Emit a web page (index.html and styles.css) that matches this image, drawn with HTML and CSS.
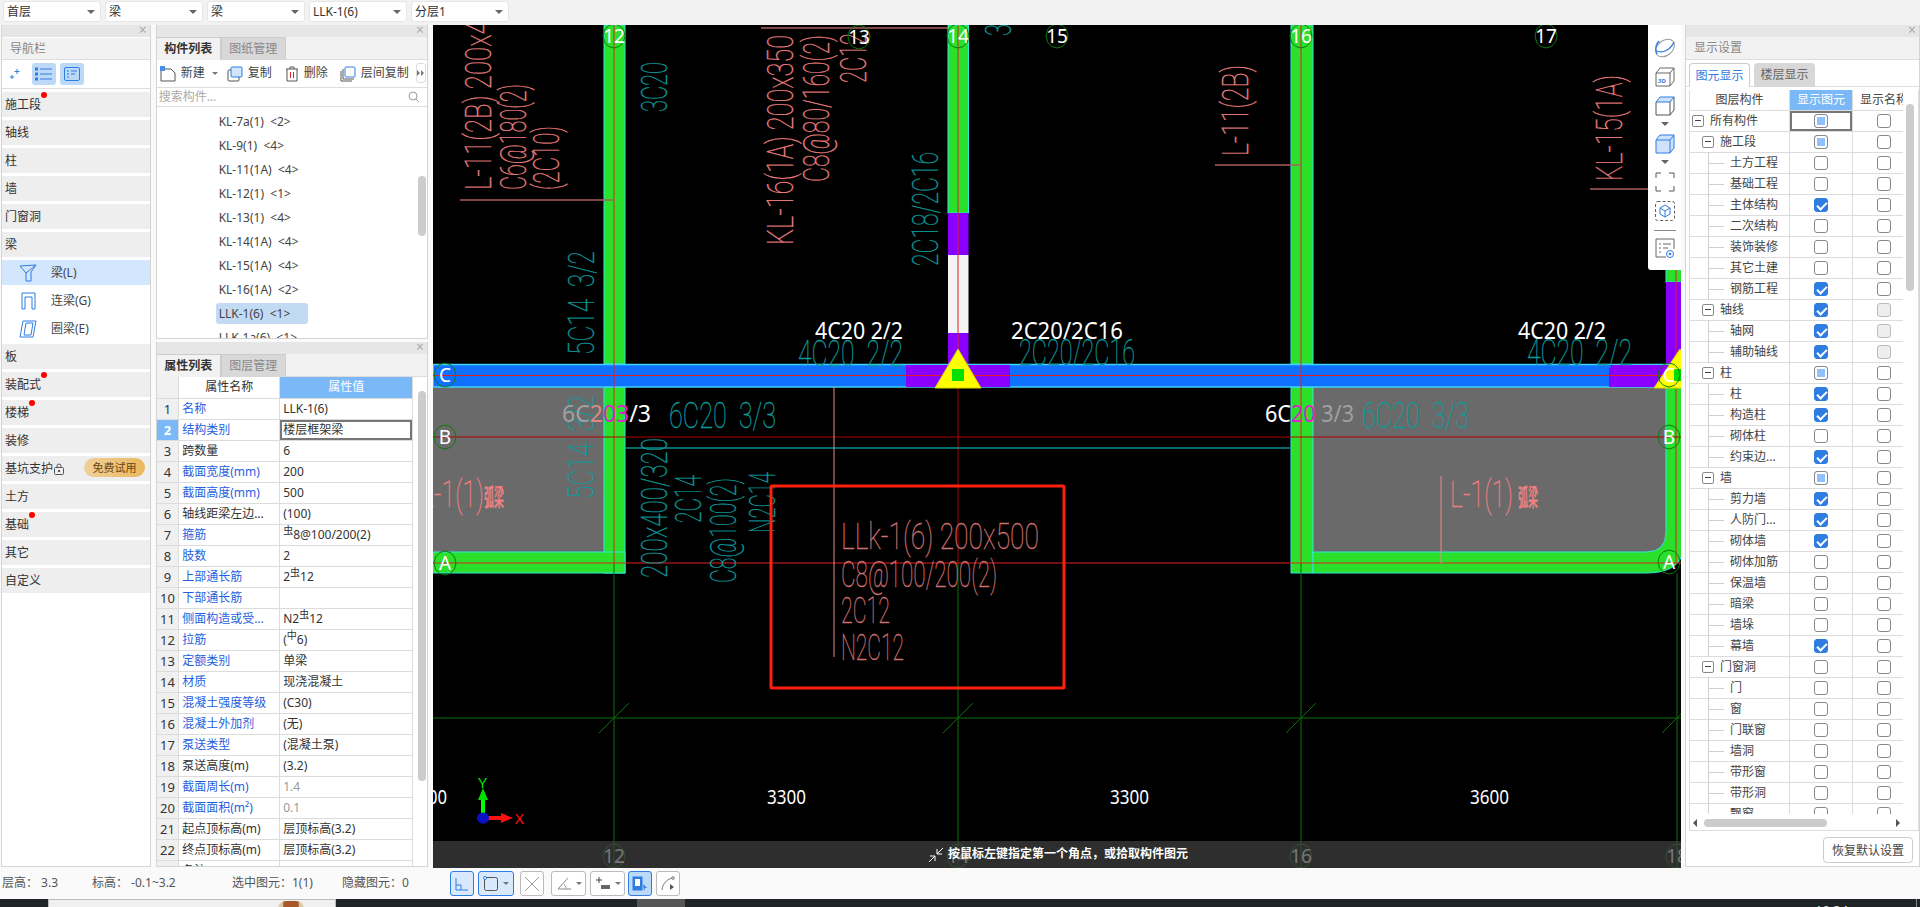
FILE: index.html
```html
<!DOCTYPE html>
<html lang="zh-CN">
<head>
<meta charset="utf-8">
<title>GTJ</title>
<link rel="stylesheet" href="styles.css">
</head>
<body>
<svg class="defs" width="0" height="0" aria-hidden="true">
  <defs>
    <polygon id="bub" points="0,-12 5.5,-10.4 9.5,-6 11,0 9.5,6 5.5,10.4 0,12 -5.5,10.4 -9.5,6 -11,0 -9.5,-6 -5.5,-10.4"/>
  </defs>
</svg>

<header class="topbar">
  <div class="combo big">首层<i class="caret"></i></div>
  <div class="combo">梁<i class="caret"></i></div>
  <div class="combo">梁<i class="caret"></i></div>
  <div class="combo">LLK-1(6)<i class="caret"></i></div>
  <div class="combo">分层1<i class="caret"></i></div>
</header>

<main class="main">
  <aside class="panel nav">
    <div class="strip"><span class="close">×</span></div>
    <div class="nav-title">导航栏</div>
    <div class="nav-tools">
      <svg class="tool-sparkle" viewBox="0 0 12 12" width="12" height="12"><path d="M8 1v5M5.5 3.5h5M3 7v4M1 9h4" stroke="#2f7de1" fill="none"/></svg>
      <span class="nav-btn"><svg viewBox="0 0 18 14" width="18" height="14"><path d="M5 2h12M5 7h12M5 12h12" stroke="#2f7de1" fill="none"/><g fill="none" stroke="#2f7de1"><rect x="0.5" y="1" width="2" height="2"/><rect x="0.5" y="6" width="2" height="2"/><rect x="0.5" y="11" width="2" height="2"/></g></svg></span>
      <span class="nav-btn"><svg viewBox="0 0 16 14" width="16" height="14"><rect x="0.5" y="0.5" width="15" height="13" rx="1.5" fill="none" stroke="#2f7de1"/><path d="M3 4h2M7 4h6M3 7h2M7 7h4M3 10h2" stroke="#2f7de1"/></svg></span>
    </div>
    <div class="nav-list">
      <div class="nav-item"><span class="dotted">施工段</span></div>
      <div class="nav-item">轴线</div>
      <div class="nav-item">柱</div>
      <div class="nav-item">墙</div>
      <div class="nav-item">门窗洞</div>
      <div class="nav-item">梁</div>
      <div class="nav-sub sel">
        <svg viewBox="0 0 18 18" width="18" height="18"><path d="M1 2l16-1-5 7v9H7V9L1 2zM7 9l10-8" fill="none" stroke="#2f7de1"/></svg>梁(L)</div>
      <div class="nav-sub">
        <svg viewBox="0 0 18 18" width="18" height="18"><path d="M3 17V1h13v16h-3V5H6v12z" fill="none" stroke="#2f7de1"/></svg>连梁(G)</div>
      <div class="nav-sub">
        <svg viewBox="0 0 18 18" width="18" height="18"><path d="M4 1h13l-3 16H1zM7 3h7l-2 12H5z" fill="none" stroke="#2f7de1"/></svg>圈梁(E)</div>
      <div class="nav-item">板</div>
      <div class="nav-item"><span class="dotted">装配式</span></div>
      <div class="nav-item"><span class="dotted">楼梯</span></div>
      <div class="nav-item">装修</div>
      <div class="nav-item plain">基坑支护<svg class="lock" viewBox="0 0 10 12" width="10" height="12"><rect x="0.5" y="4.5" width="9" height="7" rx="1" fill="none" stroke="#555"/><path d="M3 4.5V3a2 2 0 0 1 4 0v1.5" fill="none" stroke="#555"/><rect x="4" y="7" width="2" height="2" fill="#555"/></svg><span class="trial">免费试用</span></div>
      <div class="nav-item">土方</div>
      <div class="nav-item"><span class="dotted">基础</span></div>
      <div class="nav-item">其它</div>
      <div class="nav-item">自定义</div>
    </div>
  </aside>

  <section class="mid">
    <div class="panel comp">
      <div class="strip"><span class="close">×</span></div>
      <div class="tabs"><span class="tab on">构件列表</span><span class="tab">图纸管理</span></div>
      <div class="comp-tools">
        <svg viewBox="0 0 16 16" width="16" height="16"><path d="M1 3h10l4 4v8H1z" fill="none" stroke="#555"/><rect x="0" y="0" width="5" height="5" fill="#4a8ee8"/></svg><span class="lbl">新建</span><i class="mini-caret"></i>
        <svg class="gap1" viewBox="0 0 16 16" width="16" height="16"><rect x="1" y="4" width="11" height="11" rx="1" fill="#fff" stroke="#555"/><rect x="4" y="1" width="11" height="10" rx="1" fill="#d3e5fb" stroke="#2f7de1"/></svg><span class="lbl">复制</span>
        <svg class="gap2" viewBox="0 0 14 16" width="14" height="16"><path d="M1 3h12M5 3V1h4v2M2 3v12h10V3" fill="none" stroke="#555"/><path d="M5.5 6v6M8.5 6v6" stroke="#d22"/></svg><span class="lbl">删除</span>
        <svg class="gap3" viewBox="0 0 16 16" width="16" height="16"><path d="M1 5v10h11M3 3v10h11" fill="none" stroke="#555"/><rect x="5" y="1" width="10" height="10" rx="1" fill="#fff" stroke="#2f7de1"/></svg><span class="lbl">层间复制</span>
        <span class="more"><svg viewBox="0 0 8 6" width="8" height="6"><path d="M0 0l3 3-3 3zM4 0l3 3-3 3z" fill="#777"/></svg></span>
      </div>
      <div class="search"><span>搜索构件...</span><svg viewBox="0 0 12 12" width="12" height="12"><circle cx="5" cy="5" r="4" fill="none" stroke="#999"/><path d="M8 8l3 3" stroke="#999"/></svg></div>
      <div class="comp-list">
        <div class="comp-row">KL-7a(1) &nbsp;&lt;2&gt;</div>
        <div class="comp-row">KL-9(1) &nbsp;&lt;4&gt;</div>
        <div class="comp-row">KL-11(1A) &nbsp;&lt;4&gt;</div>
        <div class="comp-row">KL-12(1) &nbsp;&lt;1&gt;</div>
        <div class="comp-row">KL-13(1) &nbsp;&lt;4&gt;</div>
        <div class="comp-row">KL-14(1A) &nbsp;&lt;4&gt;</div>
        <div class="comp-row">KL-15(1A) &nbsp;&lt;4&gt;</div>
        <div class="comp-row">KL-16(1A) &nbsp;&lt;2&gt;</div>
        <div class="comp-row"><span class="comp-sel">LLK-1(6) &nbsp;&lt;1&gt;</span></div>
        <div class="comp-row">LLK-1a(6) &nbsp;&lt;1&gt;</div>
        <span class="vbar vbar-comp"></span>
      </div>
    </div>

    <div class="panel props">
      <div class="strip"><span class="close">×</span></div>
      <div class="tabs"><span class="tab on">属性列表</span><span class="tab">图层管理</span></div>
      <div class="prop-wrap">
        <table class="prop-table">
          <colgroup><col class="c-n"><col class="c-k"><col class="c-v"></colgroup>
          <tr class="head"><th class="num"></th><th>属性名称</th><th class="hot">属性值</th></tr>
          <tr><td class="num">1</td><td class="blue">名称</td><td>LLK-1(6)</td></tr>
          <tr><td class="num hot">2</td><td class="blue">结构类别</td><td class="edit">楼层框架梁</td></tr>
          <tr><td class="num">3</td><td>跨数量</td><td>6</td></tr>
          <tr><td class="num">4</td><td class="blue">截面宽度(mm)</td><td>200</td></tr>
          <tr><td class="num">5</td><td class="blue">截面高度(mm)</td><td>500</td></tr>
          <tr><td class="num">6</td><td>轴线距梁左边...</td><td>(100)</td></tr>
          <tr><td class="num">7</td><td class="blue">箍筋</td><td><sup>虫</sup>8@100/200(2)</td></tr>
          <tr><td class="num">8</td><td class="blue">肢数</td><td>2</td></tr>
          <tr><td class="num">9</td><td class="blue">上部通长筋</td><td>2<sup>虫</sup>12</td></tr>
          <tr><td class="num">10</td><td class="blue">下部通长筋</td><td></td></tr>
          <tr><td class="num">11</td><td class="blue">侧面构造或受...</td><td>N2<sup>虫</sup>12</td></tr>
          <tr><td class="num">12</td><td class="blue">拉筋</td><td>(<sup>中</sup>6)</td></tr>
          <tr><td class="num">13</td><td class="blue">定额类别</td><td>单梁</td></tr>
          <tr><td class="num">14</td><td class="blue">材质</td><td>现浇混凝土</td></tr>
          <tr><td class="num">15</td><td class="blue">混凝土强度等级</td><td>(C30)</td></tr>
          <tr><td class="num">16</td><td class="blue">混凝土外加剂</td><td>(无)</td></tr>
          <tr><td class="num">17</td><td class="blue">泵送类型</td><td>(混凝土泵)</td></tr>
          <tr><td class="num">18</td><td>泵送高度(m)</td><td>(3.2)</td></tr>
          <tr><td class="num">19</td><td class="blue">截面周长(m)</td><td class="dim">1.4</td></tr>
          <tr><td class="num">20</td><td class="blue">截面面积(m²)</td><td class="dim">0.1</td></tr>
          <tr><td class="num">21</td><td>起点顶标高(m)</td><td>层顶标高(3.2)</td></tr>
          <tr><td class="num">22</td><td>终点顶标高(m)</td><td>层顶标高(3.2)</td></tr>
          <tr><td class="num">23</td><td>备注</td><td></td></tr>
        </table>
        <span class="vbar vbar-prop"></span>
      </div>
    </div>
  </section>

  <section class="canvas">
    <svg class="cad" viewBox="433 25 1248 843" width="1248" height="843">
      <rect class="bg" x="433" y="25" width="1248" height="843"/>
      <!-- slabs -->
      <rect class="slab" x="433" y="387" width="171" height="165"/>
      <rect class="slab" x="1313" y="387" width="353" height="165"/>
      <!-- columns / beams -->
      <rect class="wall" x="604" y="25" width="21" height="339"/>
      <rect class="wall" x="604" y="387" width="21" height="186"/>
      <rect class="wall" x="433" y="552" width="192" height="21"/>
      <rect class="wall" x="948" y="25" width="20.5" height="188"/>
      <rect class="purple" x="948" y="213" width="20.5" height="42"/>
      <rect class="white" x="948" y="255" width="20.5" height="78"/>
      <rect class="purple" x="948" y="333" width="20.5" height="31"/>
      <rect class="wall" x="1291" y="25" width="22" height="339"/>
      <rect class="wall" x="1291" y="387" width="22" height="186"/>
      <path class="wall" d="M1313 552H1646Q1666 552 1666 532V387H1682V555Q1676 573 1646 573H1313Z"/>
      <rect class="wall" x="1666" y="260" width="16" height="22"/>
      <rect class="purple" x="1666" y="282" width="16" height="82"/>
      <rect class="beam" x="433" y="364.5" width="1249" height="22.5"/>
      <rect class="purple" x="906" y="365" width="104" height="22"/>
      <rect class="purple" x="1609" y="365" width="73" height="22"/>
      <!-- axes -->
      <path class="grn" d="M433 718H1681M614 563V868M958 563V868M1301 563V868M1677 573V868M599 733L629 703M943 733L973 703M1286 733L1316 703M1662 733L1681 714"/>
      <path class="red" d="M433 375.5H1681M614 25V563M958 25V388M1301 25V563M1676 25V563M433 563H1681"/>
      <path class="red-d" d="M433 437H1681M958 388V563"/>
      <path class="teal-l" d="M625 448H1291"/>
      <path class="leader" d="M460 200H614M761 28H948M1215 165H1301M1590 189H1650"/>
      <path class="pink-l" d="M834 387V657M1441 476V563"/>
      <!-- column marker -->
      <polygon class="yel" points="958,349 981,388 935,388"/>
      <rect class="sq" x="952" y="369" width="12" height="12"/>
      <polygon class="yel" points="1680,349 1703,388 1654,388"/>
      <rect class="sq" x="1674" y="369" width="12" height="12"/>

      <!-- vertical CAD text -->
      <g class="cad-txt pink">
        <text transform="translate(491,190) rotate(-90)" textLength="198" lengthAdjust="spacingAndGlyphs">L-11(2B) 200x400</text>
        <text transform="translate(526,190) rotate(-90)" textLength="106" lengthAdjust="spacingAndGlyphs">C6@180(2)</text>
        <text transform="translate(559,190) rotate(-90)" textLength="64" lengthAdjust="spacingAndGlyphs">(2C10)</text>
        <text transform="translate(793,245) rotate(-90)" textLength="210" lengthAdjust="spacingAndGlyphs">KL-16(1A) 200x350</text>
        <text transform="translate(829,182) rotate(-90)" textLength="147" lengthAdjust="spacingAndGlyphs">C8@80/160(2)</text>
        <text transform="translate(866,83) rotate(-90)" textLength="50" lengthAdjust="spacingAndGlyphs">2C12</text>
        <text transform="translate(1248,156) rotate(-90)" textLength="91" lengthAdjust="spacingAndGlyphs">L-11(2B)</text>
        <text transform="translate(1622,181) rotate(-90)" textLength="106" lengthAdjust="spacingAndGlyphs">KL-15(1A)</text>
      </g>
      <g class="cad-txt teal">
        <text transform="translate(667,112) rotate(-90)" textLength="50" lengthAdjust="spacingAndGlyphs">3C20</text>
        <text transform="translate(594,355) rotate(-90)" textLength="104" lengthAdjust="spacingAndGlyphs">5C14&#160;&#160;3/2</text>
        <text transform="translate(594,499) rotate(-90)" textLength="104" lengthAdjust="spacingAndGlyphs">5C14&#160;&#160;3/2</text>
        <text transform="translate(938,266) rotate(-90)" textLength="114" lengthAdjust="spacingAndGlyphs">2C18/2C16</text>
        <text transform="translate(667,578) rotate(-90)" textLength="140" lengthAdjust="spacingAndGlyphs">200x400/320</text>
        <text transform="translate(701,523) rotate(-90)" textLength="48" lengthAdjust="spacingAndGlyphs">2C14</text>
        <text transform="translate(736,583) rotate(-90)" textLength="105" lengthAdjust="spacingAndGlyphs">C8@100(2)</text>
        <text transform="translate(775,533) rotate(-90)" textLength="61" lengthAdjust="spacingAndGlyphs">N2C14</text>
        <text transform="translate(1011,36) rotate(-90)" textLength="12" lengthAdjust="spacingAndGlyphs">3</text>
      </g>
      <!-- horizontal teal text -->
      <g class="cad-txt teal">
        <text x="798" y="366" textLength="105" lengthAdjust="spacingAndGlyphs">4C20&#160;&#160;2/2</text>
        <text x="1019" y="365" textLength="116" lengthAdjust="spacingAndGlyphs">2C20/2C16</text>
        <text x="1527" y="365" textLength="105" lengthAdjust="spacingAndGlyphs">4C20&#160;&#160;2/2</text>
        <text x="669" y="428" textLength="107" lengthAdjust="spacingAndGlyphs">6C20&#160;&#160;3/3</text>
        <text x="1362" y="428" textLength="107" lengthAdjust="spacingAndGlyphs">6C20&#160;&#160;3/3</text>
      </g>
      <!-- selected beam label -->
      <rect class="redbox" x="771" y="486" width="293" height="202" rx="1"/>
      <g class="cad-txt pinkd">
        <text x="841" y="549" textLength="198" lengthAdjust="spacingAndGlyphs">LLk-1(6) 200x500</text>
        <text x="841" y="587" textLength="156" lengthAdjust="spacingAndGlyphs">C8@100/200(2)</text>
        <text x="841" y="623" textLength="49" lengthAdjust="spacingAndGlyphs">2C12</text>
        <text x="841" y="660" textLength="63" lengthAdjust="spacingAndGlyphs">N2C12</text>
      </g>
      <g class="cad-txt pink">
        <text x="1450" y="507" textLength="63" lengthAdjust="spacingAndGlyphs">L-1(1)</text>
        <text x="421" y="507" textLength="63" lengthAdjust="spacingAndGlyphs">L-1(1)</text>
      </g>
      <g class="arc-txt">
        <text x="1518" y="506" textLength="20" lengthAdjust="spacingAndGlyphs">弧梁</text>
        <text x="484" y="506" textLength="20" lengthAdjust="spacingAndGlyphs">弧梁</text>
      </g>
      <!-- white labels -->
      <g class="lab">
        <text x="815" y="339" textLength="88" lengthAdjust="spacingAndGlyphs">4C20 2/2</text>
        <text x="1011" y="339" textLength="112" lengthAdjust="spacingAndGlyphs">2C20/2C16</text>
        <text x="1518" y="339" textLength="88" lengthAdjust="spacingAndGlyphs">4C20 2/2</text>
        <text x="562" y="422" textLength="89" lengthAdjust="spacingAndGlyphs"><tspan class="t-grey">6C</tspan><tspan class="t-salmon">2</tspan><tspan class="t-mag">03</tspan>/3</text>
        <text x="1265" y="422" textLength="89" lengthAdjust="spacingAndGlyphs">6C<tspan class="t-mag">20</tspan><tspan class="t-grey"> 3/3</tspan></text>
      </g>
      <g class="dimt">
        <text x="767" y="804" textLength="39" lengthAdjust="spacingAndGlyphs">3300</text>
        <text x="1110" y="804" textLength="39" lengthAdjust="spacingAndGlyphs">3300</text>
        <text x="1470" y="804" textLength="39" lengthAdjust="spacingAndGlyphs">3600</text>
        <text x="428" y="804" textLength="19" lengthAdjust="spacingAndGlyphs">00</text>
      </g>
      <!-- bubbles -->
      <g class="bubbles">
        <use href="#bub" x="614" y="36"/><use href="#bub" x="859" y="37"/><use href="#bub" x="958" y="36"/>
        <use href="#bub" x="1057" y="36"/><use href="#bub" x="1301" y="36"/><use href="#bub" x="1546" y="36"/>
        <use href="#bub" x="445" y="375"/><use href="#bub" x="445" y="437"/><use href="#bub" x="445" y="563"/>
        <use href="#bub" x="1669" y="375"/><use href="#bub" x="1669" y="437"/><use href="#bub" x="1669" y="562"/>
        <use href="#bub" x="614" y="856"/><use href="#bub" x="958" y="856"/><use href="#bub" x="1301" y="856"/><use href="#bub" x="1677" y="856"/>
      </g>
      <g class="bub-t">
        <text x="614" y="43">12</text><text x="859" y="44">13</text><text x="958" y="43">14</text>
        <text x="1057" y="43">15</text><text x="1301" y="43">16</text><text x="1546" y="43">17</text>
        <text x="445" y="382">C</text><text x="445" y="444">B</text><text x="445" y="570">A</text>
        <text x="1669" y="382">C</text><text x="1669" y="444">B</text><text x="1669" y="569">A</text>
        <text x="614" y="863">12</text><text x="958" y="863">14</text><text x="1301" y="863">16</text><text x="1677" y="863">18</text>
      </g>
      <!-- UCS -->
      <path class="ucs-g" d="M483 813V798"/>
      <polygon class="ucs-gf" points="483,788 488,800 478,800"/>
      <path class="ucs-r" d="M488 818H502"/>
      <polygon class="ucs-rf" points="513,818 501,813 501,823"/>
      <ellipse class="ucs-b" cx="483" cy="818" rx="6" ry="5.5"/>
      <text class="ucs-y" x="478" y="788" textLength="9" lengthAdjust="spacingAndGlyphs">Y</text>
      <text class="ucs-x" x="515" y="824" textLength="9" lengthAdjust="spacingAndGlyphs">X</text>
    </svg>

    <div class="hint">
      <svg viewBox="0 0 16 16" width="16" height="16"><path d="M15 1L9 7M9 2v5h5M1 15l6-6M7 14V9H2" fill="none" stroke="#fff"/></svg>
      <span>按鼠标左键指定第一个角点，或拾取构件图元</span>
    </div>

    <div class="float">
      <svg class="f-globe" viewBox="0 0 22 22" width="22" height="22"><ellipse cx="11" cy="11" rx="7.5" ry="10.5" transform="rotate(50 11 11)" fill="none" stroke="#999"/><path d="M3 17C1 12 2 7 5 4" fill="none" stroke="#2f7de1" stroke-width="1.3"/><path d="M3 14c6 3 14-2 17-9" fill="none" stroke="#2f7de1" stroke-width="1.3"/></svg>
      <svg class="f-3d" viewBox="0 0 20 20" width="20" height="20"><path d="M1 6h14v13H1zM1 6l4-5h14v13l-4 5M15 6l4-5" fill="none" stroke="#666"/><text x="3" y="16">3D</text></svg>
      <svg class="f-box" viewBox="0 0 20 20" width="20" height="20"><path d="M1 6l4-5h14l-4 5z" fill="#cfe2fb" stroke="#2f7de1"/><path d="M1 6v13h14l4-5V1M15 6v13" fill="none" stroke="#555"/></svg>
      <i class="f-caret"></i>
      <svg class="f-box" viewBox="0 0 20 20" width="20" height="20"><path d="M1 6l4-5h14v13l-4 5H1z" fill="#cfe2fb" stroke="#2f7de1"/><path d="M1 6h14l4-5M15 6v13" fill="none" stroke="#2f7de1"/></svg>
      <i class="f-caret"></i>
      <svg viewBox="0 0 20 20" width="20" height="20"><path d="M1 6V1h5M14 1h5v5M19 14v5h-5M6 19H1v-5" fill="none" stroke="#555"/></svg>
      <svg class="f-hex" viewBox="0 0 20 20" width="20" height="20"><rect x="0.5" y="0.5" width="19" height="19" rx="2" fill="none" stroke="#666" stroke-dasharray="3 2"/><path d="M10 4l5 3v6l-5 3-5-3V7zM5 7l5 3 5-3M10 10v6" fill="none" stroke="#2f7de1"/></svg>
      <hr class="f-sep">
      <svg viewBox="0 0 20 20" width="20" height="20"><path d="M19 11V1H1v18h10" fill="none" stroke="#666"/><path d="M4 6h2M8 6h8M4 10h2M8 10h5M4 14h2" stroke="#666"/><circle cx="15" cy="16" r="3.5" fill="none" stroke="#2f7de1"/><circle cx="15" cy="16" r="1.3" fill="#2f7de1"/></svg>
    </div>
  </section>

  <aside class="panel display">
    <div class="strip"><span class="close">×</span></div>
    <div class="disp-title">显示设置</div>
    <div class="disp-tabs"><span class="d-tab on">图元显示</span><span class="d-tab">楼层显示</span></div>
    <div class="disp-box">
      <div class="tree">
        <div class="t-row t-head"><span class="t-name">图层构件</span><span class="t-cell hot">显示图元</span><span class="t-cell">显示名称</span></div>
        <div class="t-row l0"><span class="t-name"><i class="minus"></i>所有构件</span><span class="t-cell edit"><i class="cb half"></i></span><span class="t-cell"><i class="cb"></i></span></div>
        <div class="t-row l1"><span class="t-name"><i class="minus"></i>施工段</span><span class="t-cell"><i class="cb half"></i></span><span class="t-cell"><i class="cb"></i></span></div>
        <div class="t-row l2"><span class="t-name">土方工程</span><span class="t-cell"><i class="cb"></i></span><span class="t-cell"><i class="cb"></i></span></div>
        <div class="t-row l2"><span class="t-name">基础工程</span><span class="t-cell"><i class="cb"></i></span><span class="t-cell"><i class="cb"></i></span></div>
        <div class="t-row l2"><span class="t-name">主体结构</span><span class="t-cell"><i class="cb on"></i></span><span class="t-cell"><i class="cb"></i></span></div>
        <div class="t-row l2"><span class="t-name">二次结构</span><span class="t-cell"><i class="cb"></i></span><span class="t-cell"><i class="cb"></i></span></div>
        <div class="t-row l2"><span class="t-name">装饰装修</span><span class="t-cell"><i class="cb"></i></span><span class="t-cell"><i class="cb"></i></span></div>
        <div class="t-row l2"><span class="t-name">其它土建</span><span class="t-cell"><i class="cb"></i></span><span class="t-cell"><i class="cb"></i></span></div>
        <div class="t-row l2"><span class="t-name">钢筋工程</span><span class="t-cell"><i class="cb on"></i></span><span class="t-cell"><i class="cb"></i></span></div>
        <div class="t-row l1"><span class="t-name"><i class="minus"></i>轴线</span><span class="t-cell"><i class="cb on"></i></span><span class="t-cell"><i class="cb off"></i></span></div>
        <div class="t-row l2"><span class="t-name">轴网</span><span class="t-cell"><i class="cb on"></i></span><span class="t-cell"><i class="cb off"></i></span></div>
        <div class="t-row l2"><span class="t-name">辅助轴线</span><span class="t-cell"><i class="cb on"></i></span><span class="t-cell"><i class="cb off"></i></span></div>
        <div class="t-row l1"><span class="t-name"><i class="minus"></i>柱</span><span class="t-cell"><i class="cb half"></i></span><span class="t-cell"><i class="cb"></i></span></div>
        <div class="t-row l2"><span class="t-name">柱</span><span class="t-cell"><i class="cb on"></i></span><span class="t-cell"><i class="cb"></i></span></div>
        <div class="t-row l2"><span class="t-name">构造柱</span><span class="t-cell"><i class="cb on"></i></span><span class="t-cell"><i class="cb"></i></span></div>
        <div class="t-row l2"><span class="t-name">砌体柱</span><span class="t-cell"><i class="cb"></i></span><span class="t-cell"><i class="cb"></i></span></div>
        <div class="t-row l2"><span class="t-name">约束边...</span><span class="t-cell"><i class="cb on"></i></span><span class="t-cell"><i class="cb"></i></span></div>
        <div class="t-row l1"><span class="t-name"><i class="minus"></i>墙</span><span class="t-cell"><i class="cb half"></i></span><span class="t-cell"><i class="cb"></i></span></div>
        <div class="t-row l2"><span class="t-name">剪力墙</span><span class="t-cell"><i class="cb on"></i></span><span class="t-cell"><i class="cb"></i></span></div>
        <div class="t-row l2"><span class="t-name">人防门...</span><span class="t-cell"><i class="cb on"></i></span><span class="t-cell"><i class="cb"></i></span></div>
        <div class="t-row l2"><span class="t-name">砌体墙</span><span class="t-cell"><i class="cb on"></i></span><span class="t-cell"><i class="cb"></i></span></div>
        <div class="t-row l2"><span class="t-name">砌体加筋</span><span class="t-cell"><i class="cb"></i></span><span class="t-cell"><i class="cb"></i></span></div>
        <div class="t-row l2"><span class="t-name">保温墙</span><span class="t-cell"><i class="cb"></i></span><span class="t-cell"><i class="cb"></i></span></div>
        <div class="t-row l2"><span class="t-name">暗梁</span><span class="t-cell"><i class="cb"></i></span><span class="t-cell"><i class="cb"></i></span></div>
        <div class="t-row l2"><span class="t-name">墙垛</span><span class="t-cell"><i class="cb"></i></span><span class="t-cell"><i class="cb"></i></span></div>
        <div class="t-row l2"><span class="t-name">幕墙</span><span class="t-cell"><i class="cb on"></i></span><span class="t-cell"><i class="cb"></i></span></div>
        <div class="t-row l1"><span class="t-name"><i class="minus"></i>门窗洞</span><span class="t-cell"><i class="cb"></i></span><span class="t-cell"><i class="cb"></i></span></div>
        <div class="t-row l2"><span class="t-name">门</span><span class="t-cell"><i class="cb"></i></span><span class="t-cell"><i class="cb"></i></span></div>
        <div class="t-row l2"><span class="t-name">窗</span><span class="t-cell"><i class="cb"></i></span><span class="t-cell"><i class="cb"></i></span></div>
        <div class="t-row l2"><span class="t-name">门联窗</span><span class="t-cell"><i class="cb"></i></span><span class="t-cell"><i class="cb"></i></span></div>
        <div class="t-row l2"><span class="t-name">墙洞</span><span class="t-cell"><i class="cb"></i></span><span class="t-cell"><i class="cb"></i></span></div>
        <div class="t-row l2"><span class="t-name">带形窗</span><span class="t-cell"><i class="cb"></i></span><span class="t-cell"><i class="cb"></i></span></div>
        <div class="t-row l2"><span class="t-name">带形洞</span><span class="t-cell"><i class="cb"></i></span><span class="t-cell"><i class="cb"></i></span></div>
        <div class="t-row l2"><span class="t-name">飘窗</span><span class="t-cell"><i class="cb"></i></span><span class="t-cell"><i class="cb"></i></span></div>
      </div>
      <span class="vbar vbar-tree"></span>
      <div class="hbar"><i class="h-left"></i><span class="h-thumb"></span><i class="h-right"></i></div>
    </div>
    <div class="disp-foot"><button class="reset">恢复默认设置</button></div>
  </aside>
</main>

<footer class="status">
  <span class="st st1">层高： 3.3</span>
  <span class="st st2">标高： -0.1~3.2</span>
  <span class="st st3">选中图元：1(1)</span>
  <span class="st st4">隐藏图元：0</span>
  <div class="snap">
    <span class="sb on w24"><svg viewBox="0 0 14 14" width="14" height="14"><path d="M1 1v12h12M1 8h5v5" fill="none" stroke="#2f7de1"/></svg></span>
    <span class="sb on w36"><svg viewBox="0 0 16 16" width="16" height="16"><rect x="1.5" y="1.5" width="13" height="13" rx="2" fill="none" stroke="#555"/><circle cx="2" cy="2" r="1.5" fill="#fff" stroke="#2f7de1"/></svg><i class="mini-caret"></i></span>
    <span class="sb w24 g6"><svg viewBox="0 0 16 16" width="16" height="16"><path d="M1 1l14 14M15 1L1 15" stroke="#999" fill="none"/></svg></span>
    <span class="sb w35 g7"><svg viewBox="0 0 16 16" width="16" height="16"><path d="M2 13L12 2M2 13h13" stroke="#888" fill="none"/><path d="M8 8l3 5" stroke="#aaa" fill="none"/></svg><i class="mini-caret"></i></span>
    <span class="sb w35 g4"><svg viewBox="0 0 16 16" width="16" height="16"><path d="M1 4h6M4 1v6" stroke="#444" fill="none"/><rect x="6" y="9" width="9" height="4" fill="#666"/></svg><i class="mini-caret"></i></span>
    <span class="sb on2 w24 g3"><svg viewBox="0 0 16 16" width="16" height="16"><rect x="1" y="1" width="9" height="13" fill="#2f7de1" stroke="#2f7de1"/><rect x="3" y="3" width="5" height="7" fill="#fff"/><path d="M11 8l4 4-2 0-1 3z" fill="#2f7de1"/></svg></span>
    <span class="sb w24 g4"><svg viewBox="0 0 16 16" width="16" height="16"><path d="M2 14C3 7 7 3 13 2" fill="none" stroke="#777"/><circle cx="13" cy="2" r="1.3" fill="#fff" stroke="#777"/><path d="M10 8l4 3-4 3z" fill="#555"/></svg></span>
  </div>
</footer>

<div class="taskbar">
  <div class="task-win"><i class="task-face"></i></div>
  <span class="task-gray"></span>
  <span class="task-clock">10:34</span>
  <span class="task-line"></span>
</div>
</body>
</html>
```

FILE: styles.css
```css
*{box-sizing:border-box}
html,body{margin:0;padding:0}
body{width:1920px;height:907px;overflow:hidden;background:#fafafa;font:12px/1.2 "Noto Sans","Noto Sans CJK SC",sans-serif;color:#333}
.defs{position:absolute}
.topbar{height:25px;background:#f2f2f2;display:flex;gap:4px;padding:1px 0 0 3px}
.combo{width:98px;height:21px;background:#fff;border-radius:3px;border:1px solid #e6e6e6;padding:0 3px;line-height:19px;font-size:12px;color:#333;position:relative}
.caret{position:absolute;right:5px;top:8px;border:4px solid transparent;border-top-color:#666;border-bottom:0}
.main{display:flex;height:843px;background:#fafafa;padding-left:1px}
.panel{background:#fff;border:1px solid #d4d4d4;position:relative}
.strip{height:12px;background:#e6e6e6;position:relative;flex:none}
.close{position:absolute;right:3px;top:-3px;font-size:14px;line-height:15px;color:#aaa}
.nav{width:150px;height:842px;border-top:0}
.nav-title{background:#f2f2f2;padding:2px 8px;color:#888;line-height:18px;border-top:1px solid #fff;border-bottom:1px solid #ddd;height:23px}
.nav-tools{display:flex;align-items:center;padding-left:7px;gap:4px;border-bottom:1px solid #ddd;height:29px}
.tool-sparkle{margin-right:7px}
.nav-btn{width:24px;height:22px;background:#bcd9f7;border-radius:3px;display:flex;align-items:center;justify-content:center}
.nav-list{padding-top:3px;display:flex;flex-direction:column;gap:3px}
.nav-item{height:25px;background:#eee;line-height:25px;padding-left:3px;font-size:12px;color:#333;display:flex;align-items:center;position:relative;flex:none}
.dotted{position:relative}
.dotted::after{content:"";position:absolute;right:-6px;top:0;width:6px;height:6px;border-radius:50%;background:#f00}
.nav-sub{height:25px;line-height:25px;display:flex;align-items:center;padding-left:17px;gap:14px;color:#444;flex:none}
.nav-sub.sel{background:#d2e6fd}
.lock{margin-left:1px}
.trial{position:absolute;left:82px;top:2px;width:61px;height:19px;border-radius:10px;background:linear-gradient(90deg,#f0d09a,#eab85e);color:#6b4410;font-size:11px;line-height:19px;text-align:center}
.mid{width:273px;margin-left:5px;display:flex;flex-direction:column;height:842px}
.comp{height:314px;display:flex;flex-direction:column;border-top:0}
.props{height:525px;margin-top:3px;display:flex;flex-direction:column;border-top:0}
.tabs{height:23px;background:#f2f2f2;display:flex;border-bottom:1px solid #ddd;flex:none}
.tab{width:65px;height:23px;text-align:center;line-height:22px;font-size:12px;background:#d8d8d8;color:#888;border:1px solid #ccc;border-bottom:0}
.tab.on{width:64px;background:#f2f2f2;color:#333;font-weight:700;border-left:0}
.comp-tools{height:28px;display:flex;align-items:center;padding-left:3px;border-bottom:1px solid #ddd;flex:none;position:relative}
.lbl{margin-left:5px;color:#444}
.mini-caret{display:inline-block;border:3px solid transparent;border-top-color:#777;border-bottom:0;margin-left:7px}
.gap1{margin-left:9px}
.gap2{margin-left:13px}
.gap3{margin-left:12px}
.more{position:absolute;right:1px;top:3px;width:10px;height:20px;border:1px solid #ddd;border-radius:3px;display:flex;align-items:center;justify-content:center}
.search{height:19px;display:flex;align-items:center;justify-content:space-between;padding:0 7px 0 2px;color:#aaa;border-bottom:1px solid #ddd;flex:none}
.comp-list{flex:1;position:relative;overflow:hidden;padding-top:3px}
.comp-row{height:24px;line-height:24px;padding-left:62px;color:#444;white-space:nowrap}
.comp-sel{display:inline-block;height:21px;line-height:21px;background:#c3daf5;border-radius:3px;width:92px;margin-left:-3px;padding-left:3px;vertical-align:top;margin-top:1px}
.vbar{position:absolute;width:8px;background:#ccc;border-radius:4px;display:block}
.vbar-comp{left:261px;top:69px;height:60px}
.prop-wrap{flex:1;position:relative;overflow:hidden}
.prop-table{border-collapse:collapse;table-layout:fixed;width:256px;font-size:12px}
.c-n{width:22px}.c-k{width:101px}.c-v{width:133px}
.prop-table td,.prop-table th{height:21px;padding:0 0 0 3px;border:1px solid #dcdcdc;border-width:0 1px 1px 0;white-space:nowrap;overflow:hidden;font-weight:400;line-height:20px}
.prop-table th{text-align:center;padding:0}
.prop-table .num{background:#f0f0f0;text-align:center;padding:0;font-size:13px;color:#333}
.prop-table .hot{background:#7ab8f8;color:#fff;font-size:12px}
.prop-table td.num.hot{font-weight:700;font-size:13px}
.blue{color:#1f5fe0}
.prop-table td.edit{box-shadow:inset 0 0 0 2px #777}
.dim{color:#999}
sup{font-size:10px;line-height:0;vertical-align:5px}
.vbar-prop{left:261px;top:14px;height:390px}
.canvas{width:1248px;height:843px;margin-left:5px;position:relative;background:#000;flex:none}
.cad{display:block;position:absolute;left:0;top:0}
.bg{fill:#000}
.slab{fill:#6a6a6a}
.wall{fill:#2be02b;stroke:#30e8e0;stroke-width:1}
.purple{fill:#8a00ff}
.white{fill:#f4f4f4}
.beam{fill:#1070ff;stroke:#40d4f4;stroke-width:1.5}
.grn{stroke:#0a700a;stroke-width:1;fill:none}
.red{stroke:#e02020;stroke-width:1;fill:none}
.red-d{stroke:#b00000;stroke-width:1;fill:none}
.teal-l{stroke:#0a8f8f;stroke-width:1.5;fill:none}
.leader{stroke:#a86060;stroke-width:1.5;fill:none}
.pink-l{stroke:#e88a8a;stroke-width:1;fill:none}
.yel{fill:#ff0;stroke:#d8d800;stroke-width:1}
.sq{fill:#00e000}
.cad-txt text{font:100 36px Roboto,"Liberation Sans",sans-serif;stroke-width:.35px}
.pink text{fill:#ef8080;stroke:#ef8080}
.teal text{fill:#0d9a9a;stroke:#0d9a9a}
.pinkd text{fill:#d07070;stroke:#d07070}
.arc-txt text{font:700 24px "Noto Sans CJK SC",sans-serif;fill:#ef8080}
.lab text{font:400 23px "Noto Sans",sans-serif;fill:#fff}
.t-grey{fill:#a0a0a0}
.t-salmon{fill:#d88}
.t-mag{fill:#e020d0}
.dimt text{font:400 19px "Noto Sans",sans-serif;fill:#fff}
.redbox{fill:none;stroke:#ff2010;stroke-width:3}
.bubbles{fill:none;stroke:#0a7a0a;stroke-width:1}
.bub-t text{font:400 19px "Noto Sans",sans-serif;fill:#fff;text-anchor:middle}
.ucs-g{stroke:#0f0;stroke-width:4}
.ucs-gf{fill:#00e000}
.ucs-r{stroke:#ff1010;stroke-width:4}
.ucs-rf{fill:#ff1010}
.ucs-b{fill:#0a10c8}
.ucs-y{font:400 15px "Noto Sans",sans-serif;fill:#00e000}
.ucs-x{font:400 15px "Noto Sans",sans-serif;fill:#ff1010}
.hint{position:absolute;left:0;right:0;bottom:0;height:27px;background:rgba(64,64,64,.72);display:flex;align-items:center;padding-left:495px;gap:4px;color:#fff;font-weight:700;font-size:12px}
.float{position:absolute;right:0;top:0;width:33px;height:245px;background:#fff;border-radius:0 0 0 3px;display:flex;flex-direction:column;align-items:center;padding-top:12px}
.float svg{flex:none;margin-bottom:9px}
.float .f-globe{margin-bottom:8px}
.float .f-box{margin-bottom:0}
.f-3d text{font:700 6px "Noto Sans",sans-serif;fill:#2f7de1}
.f-caret{border:4px solid transparent;border-top-color:#666;border-bottom:0;margin:6px 0 8px;flex:none}
.f-sep{width:22px;margin:0 0 7px;border:0;border-top:1px solid #888;flex:none}
.display{width:235px;height:842px;margin-left:4px;border-top:0;display:flex;flex-direction:column;flex:none}
.disp-title{height:23px;background:#f2f2f2;color:#888;padding-left:8px;line-height:22px;flex:none;border-bottom:1px solid #ddd}
.disp-tabs{height:27px;display:flex;gap:4px;padding:3px 0 0 3px;background:#fff;flex:none;border-bottom:1px solid #ddd}
.d-tab{width:61px;height:24px;line-height:23px;text-align:center;background:#d8d8d8;color:#666;border-radius:4px 4px 0 0}
.d-tab.on{background:#fff;color:#2f7de1;border:1px solid #ccc;border-bottom:1px solid #fff}
.disp-box{position:relative;height:741px;width:230px;margin:3px 0 0 3px;border:1px solid #ddd;border-top:0;flex:none;overflow:hidden}
.tree{width:213px;height:724px;overflow:hidden}
.t-row{display:flex;height:21px;border-bottom:1px solid #dcdcdc;width:226px;position:relative}
.t-name{width:100px;flex:none;border-right:1px solid #dcdcdc;line-height:20px;position:relative;white-space:nowrap;color:#444}
.t-head .t-name{text-align:center}
.t-cell{width:63px;flex:none;border-right:1px solid #dcdcdc;display:flex;align-items:center;justify-content:center;line-height:20px;color:#444}
.t-cell.hot{background:#7ab8f8;color:#fff}
.t-cell.edit{box-shadow:inset 0 0 0 2px #777}
.l0 .t-name{padding-left:20px}
.l1 .t-name{padding-left:30px}
.l2 .t-name{padding-left:40px}
.l2 .t-name::before{content:"";position:absolute;left:18px;top:10px;width:16px;border-top:1px solid #d0d0d0}
.l2 .t-name::after{content:"";position:absolute;left:18px;top:-1px;height:22px;border-left:1px solid #d0d0d0}
.minus{position:absolute;top:4px;width:12px;height:12px;border:1px solid #888;border-radius:2px;background:#fff}
.minus::after{content:"";position:absolute;left:2px;right:2px;top:4px;border-top:1px solid #444}
.l0 .minus{left:2px}
.l1 .minus{left:12px}
.cb{display:block;width:14px;height:14px;border:1px solid #888;border-radius:3px;background:#fff;position:relative;margin-bottom:1px}
.cb.on{background:#2f7de1;border-color:#2f7de1}
.cb.on::after{content:"";position:absolute;left:4px;top:1px;width:4px;height:8px;border:solid #fff;border-width:0 2px 2px 0;transform:rotate(45deg)}
.cb.half{background:#8fc0ff;box-shadow:inset 0 0 0 2px #fff}
.cb.off{background:#eee;border-color:#bbb}
.vbar-tree{left:216px;top:14px;height:187px}
.hbar{position:absolute;left:0;right:0;bottom:0;height:15px;background:#fff}
.h-thumb{position:absolute;left:14px;top:4px;width:123px;height:8px;border-radius:4px;background:#ccc}
.h-left,.h-right{position:absolute;top:4px;border:4px solid transparent}
.h-left{left:3px;border-right-color:#555;border-left:0}
.h-right{left:206px;border-left-color:#555;border-right:0}
.disp-foot{flex:1;display:flex;justify-content:flex-end;padding:6px 6px 0 0}
.reset{width:90px;height:26px;padding:0;border:1px solid #ccc;border-radius:4px;background:#fff;font:12px "Noto Sans","Noto Sans CJK SC",sans-serif;color:#444}
.status{height:31px;background:#fafafa;display:flex;align-items:center;position:relative;color:#555}
.st{flex:none;white-space:nowrap}
.st1{width:92px;padding-left:2px}
.st2{width:140px}
.st3{width:110px}
.st4{width:110px}
.snap{display:flex;margin:0 0 0 -2px;height:25px;align-items:center}
.sb{height:25px;border:1px solid #bbb;border-radius:3px;background:#fff;display:flex;align-items:center;justify-content:center;flex:none}
.sb .mini-caret{margin-left:4px}
.w24{width:24px}.w36{width:36px;margin-left:4px}.w35{width:35px}
.g6{margin-left:6px}.g7{margin-left:7px}.g4{margin-left:4px}.g3{margin-left:3px}
.sb.on{background:#d8e9fd;border-color:#2f7de1}
.sb.on2{background:#bcd9f7;border-color:#2f7de1}
.taskbar{height:8px;background:#1f2526;position:relative;overflow:hidden}
.task-win{position:absolute;left:48px;top:0;width:288px;height:8px;background:#f0f0f0;border:1px solid #bbb;border-bottom:0}
.task-face{position:absolute;left:229px;top:1px;width:26px;height:10px;border-radius:8px 8px 0 0;background:linear-gradient(90deg,#d8c8a8 0,#d8c8a8 18%,#a9582a 22%,#a9582a 78%,#d8c8a8 82%)}
.task-gray{position:absolute;left:637px;top:0;width:48px;height:8px;background:#555}
.task-clock{position:absolute;left:1815px;top:3px;color:#ddd;font-size:13px;line-height:16px}
.task-line{position:absolute;left:1916px;top:0;width:1px;height:8px;background:#888}
```
